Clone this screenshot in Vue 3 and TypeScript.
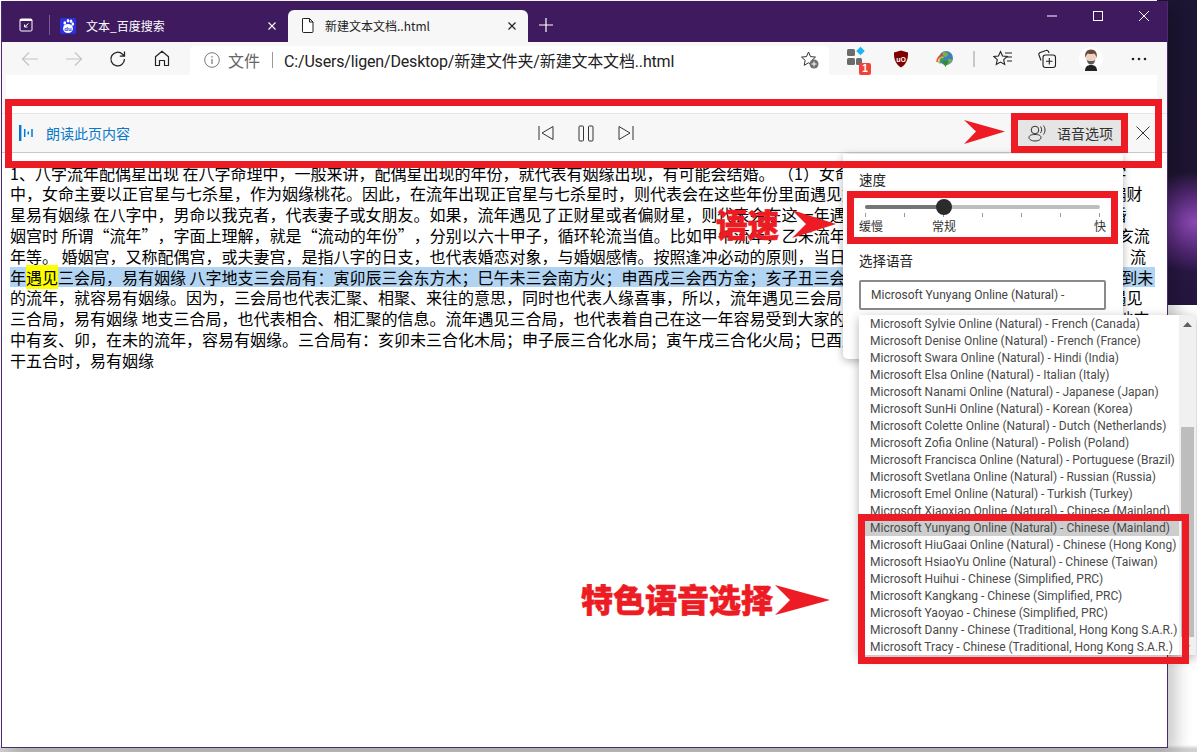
<script setup lang="ts">
const before: string[] = [
  '1、八字流年配偶星出现 在八字命理中，一般来讲，配偶星出现的年份，就代表有姻缘出现，有可能会结婚。 （1）女命流年配偶星容易出现，易有姻缘 在八字',
  '中，女命主要以正官星与七杀星，作为姻缘桃花。因此，在流年出现正官星与七杀星时，则代表会在这些年份里面遇见姻缘桃花。 （2）男命流年遇见正财或偏财',
  '星易有姻缘 在八字中，男命以我克者，代表妻子或女朋友。如果，流年遇见了正财星或者偏财星，则代表会在这一年遇见心仪的对象，有望结婚2、流年冲动婚',
]
const after: string[] = [
  '的流年，就容易有姻缘。因为，三会局也代表汇聚、相聚、来往的意思，同时也代表人缘喜事，所以，流年遇见三会局，也就代表容易有姻缘出现。 4、流年遇见',
  '三合局，易有姻缘 地支三合局，也代表相合、相汇聚的信息。流年遇见三合局，也代表着自己在这一年容易受到大家的喜欢和关注。比如，如果你的命局八字地支',
  '中有亥、卯，在未的流年，容易有姻缘。三合局有：亥卯未三合化木局；申子辰三合化水局；寅午戌三合化火局；巳酉丑三合化金局。 5、流年天',
  '干五合时，易有姻缘',
]

const voices: string[] = [
  'Microsoft Sylvie Online (Natural) - French (Canada)',
  'Microsoft Denise Online (Natural) - French (France)',
  'Microsoft Swara Online (Natural) - Hindi (India)',
  'Microsoft Elsa Online (Natural) - Italian (Italy)',
  'Microsoft Nanami Online (Natural) - Japanese (Japan)',
  'Microsoft SunHi Online (Natural) - Korean (Korea)',
  'Microsoft Colette Online (Natural) - Dutch (Netherlands)',
  'Microsoft Zofia Online (Natural) - Polish (Poland)',
  'Microsoft Francisca Online (Natural) - Portuguese (Brazil)',
  'Microsoft Svetlana Online (Natural) - Russian (Russia)',
  'Microsoft Emel Online (Natural) - Turkish (Turkey)',
  'Microsoft Xiaoxiao Online (Natural) - Chinese (Mainland)',
  'Microsoft Yunyang Online (Natural) - Chinese (Mainland)',
  'Microsoft HiuGaai Online (Natural) - Chinese (Hong Kong)',
  'Microsoft HsiaoYu Online (Natural) - Chinese (Taiwan)',
  'Microsoft Huihui - Chinese (Simplified, PRC)',
  'Microsoft Kangkang - Chinese (Simplified, PRC)',
  'Microsoft Yaoyao - Chinese (Simplified, PRC)',
  'Microsoft Danny - Chinese (Traditional, Hong Kong S.A.R.)',
  'Microsoft Tracy - Chinese (Traditional, Hong Kong S.A.R.)',
]
const activeVoice = 12
</script>

<template>
  <div class="screen">
    <div class="wallpaper"></div>
    <div class="window">
      <header class="titlebar">
        <svg class="workspace" width="14" height="14" viewBox="0 0 14 14">
          <rect x="0.5" y="0.5" width="13" height="13" rx="2" fill="#fff" />
          <rect x="1.5" y="3" width="11" height="9.5" fill="#401a5e" />
          <path d="M9.5 5.5 6 8.5M5.5 6.5v2.5h3" stroke="#fff" fill="none" />
        </svg>
        <span class="tab-sep"></span>
        <div class="tab">
          <svg width="16" height="16" viewBox="0 0 16 16">
            <rect width="16" height="16" rx="2" fill="#2932e1" />
            <ellipse cx="8" cy="2.8" rx="1.3" ry="1.8" fill="#fff" />
            <ellipse cx="11" cy="3.2" rx="1.3" ry="1.8" fill="#fff" />
            <ellipse cx="4.8" cy="5" rx="1.4" ry="1.8" fill="#fff" />
            <ellipse cx="12.8" cy="6" rx="1.3" ry="1.7" fill="#fff" />
            <ellipse cx="8" cy="10.5" rx="5" ry="4.5" fill="#fff" />
            <text x="8" y="13" class="du">du</text>
          </svg>
          <span class="tab-title light">文本_百度搜索</span>
          <svg class="tab-close" width="10" height="10" viewBox="0 0 10 10">
            <path d="M1.5 1.5l7 7M8.5 1.5l-7 7" stroke="#fff" stroke-width="1.1" />
          </svg>
        </div>
        <div class="tab active">
          <svg width="12" height="15" viewBox="0 0 12 15">
            <path d="M1.5.5h6l3.5 3.5v9.5a1 1 0 0 1-1 1h-8.500a1 1 0 0 1-1-1v-12.500a1 1 0 0 1 1-1zM7.500.5v3.500h3.500" fill="#fff" stroke="#222" />
          </svg>
          <span class="tab-title">新建文本文档..html</span>
          <svg class="tab-close" width="10" height="10" viewBox="0 0 10 10">
            <path d="M1.500 1.500l7 7M8.500 1.500l-7 7" stroke="#222" stroke-width="1.200" />
          </svg>
        </div>
        <svg class="newtab" width="16" height="16" viewBox="0 0 16 16">
          <path d="M8 1v14M1 8h14" stroke="#fff" stroke-width="1.200" />
        </svg>
        <div class="winctrls">
          <span><svg width="12" height="12" viewBox="0 0 12 12"><path d="M1 6h10" stroke="#fff" /></svg></span>
          <span><svg width="12" height="12" viewBox="0 0 12 12"><rect x="1.500" y="1.500" width="9" height="9" fill="none" stroke="#fff" /></svg></span>
          <span><svg width="12" height="12" viewBox="0 0 12 12"><path d="M1 1l10 10M11 1L1 11" stroke="#fff" /></svg></span>
        </div>
      </header>

      <nav class="toolbar">
        <button class="tool">
          <svg width="18" height="16" viewBox="0 0 18 16"><path d="M17 8H1.500M8 1.500L1.500 8 8 14.500" fill="none" stroke="#c4c4c4" stroke-width="1.200" /></svg>
        </button>
        <button class="tool">
          <svg width="18" height="16" viewBox="0 0 18 16"><path d="M1 8h15.500M10 1.500L16.500 8 10 14.500" fill="none" stroke="#c4c4c4" stroke-width="1.200" /></svg>
        </button>
        <button class="tool">
          <svg width="18" height="18" viewBox="0 0 18 18"><path d="M15.500 9a6.800 6.800 0 1 1-2-4.800L15.500 6.200M15.500 1.500v4.700h-4.700" fill="none" stroke="#222" stroke-width="1.300" /></svg>
        </button>
        <button class="tool">
          <svg width="16" height="17" viewBox="0 0 16 17"><path d="M1.500 15.500V6.800L8 1.200l6.500 5.600v8.700h-4v-5h-5v5z" fill="none" stroke="#222" stroke-width="1.200" stroke-linejoin="round" /></svg>
        </button>
        <div class="address">
          <svg width="16" height="16" viewBox="0 0 16 16">
            <circle cx="8" cy="8" r="7.300" fill="none" stroke="#7a7a7a" />
            <path d="M8 7v5M8 4v1.500" stroke="#7a7a7a" stroke-width="1.200" />
          </svg>
          <span class="scheme">文件</span>
          <span class="addr-sep"></span>
          <span class="url">C:/Users/ligen/Desktop/新建文件夹/新建文本文档..html</span>
          <svg class="star-add" width="20" height="20" viewBox="0 0 20 20">
            <path d="M8.500 2l2 4.600 5 .5-3.700 3.300 1 4.900-4.300-2.500-4.300 2.500 1-4.900L1.500 7.100l5-.5z" fill="none" stroke="#333" />
            <circle cx="14" cy="14" r="4.500" fill="#6e6e6e" />
            <path d="M14 11.500v5M11.500 14h5" stroke="#fff" />
          </svg>
        </div>
        <button class="tool ext">
          <svg width="24" height="26" viewBox="0 0 24 26">
            <rect x="2" y="3" width="8" height="7" rx="1.500" fill="#6b6b6b" />
            <rect x="2" y="12" width="8" height="7" rx="1.500" fill="#6b6b6b" />
            <rect x="11" y="12" width="6" height="7" rx="1.500" fill="#6b6b6b" />
            <rect x="12.500" y="2" width="6" height="6" transform="rotate(45 15.500 5)" fill="#19b5f5" />
          </svg>
          <span class="badge">1</span>
        </button>
        <button class="tool">
          <svg width="16" height="18" viewBox="0 0 16 18">
            <path d="M8 .5l7 2c.3 7-2 12-7 15-5-3-7.300-8-7-15z" fill="#800000" />
            <text x="8" y="11.500" class="ubo">uO</text>
          </svg>
        </button>
        <button class="tool">
          <svg width="18" height="18" viewBox="0 0 18 18">
            <circle cx="10" cy="8" r="7" fill="#3f7fb5" />
            <path d="M6 2.500c3-1 6 0 6 2s-3 3-4 2-2-3-2-4zM12 9c2 0 4 0 4 1s-2 4-4 4z" fill="#78b04a" />
            <path d="M1 12c0-4 3-7 6-7" fill="none" stroke="#e8452c" stroke-width="1.500" />
            <path d="M2.500 13c0-4 2.500-6 5-6" fill="none" stroke="#f2c12e" stroke-width="1.500" />
            <path d="M4 13.500c.3-3 2-5 4-5" fill="none" stroke="#3aa54a" stroke-width="1.500" />
            <path d="M6 11h7l-3.500 6z" fill="#2f8f2f" />
          </svg>
        </button>
        <span class="tool-sep"></span>
        <button class="tool">
          <svg width="20" height="18" viewBox="0 0 20 18">
            <path d="M7.500 1.500l2 4.500 4.800.5-3.600 3.200 1 4.800-4.200-2.400L3.300 14.500l1-4.800L.8 6.500l4.700-.5z" fill="none" stroke="#222" stroke-width="1.100" />
            <path d="M12 3h7M14 7h5M14 11h5" stroke="#222" stroke-width="1.100" />
          </svg>
        </button>
        <button class="tool">
          <svg width="20" height="20" viewBox="0 0 20 20">
            <path d="M4 11.500l-2-5.500a2 2 0 0 1 1.200-2.500L9 1.500a2 2 0 0 1 2.500 1l.5 1.500" fill="none" stroke="#222" stroke-width="1.100" />
            <rect x="6" y="6" width="12.500" height="12.500" rx="2.500" fill="none" stroke="#222" stroke-width="1.100" />
            <path d="M12.300 9v6.500M9 12.300h6.500" stroke="#222" stroke-width="1.100" />
          </svg>
        </button>
        <button class="tool">
          <svg width="24" height="24" viewBox="0 0 24 24">
            <circle cx="12" cy="12" r="12" fill="#fff" />
            <path d="M6 24c0-4 2-6 6-6s6 2 6 6z" fill="#222" />
            <ellipse cx="12" cy="10.500" rx="5" ry="6" fill="#ecd2c2" />
            <path d="M6.500 11C5 5.500 8 2.500 12 2.500s7 3 5.500 8.500c-.5-2.500-1.500-4-2.500-4.500-2 .8-4.500.8-6 0-1 .5-2 2-2.500 4.500z" fill="#6a4a3c" />
            <path d="M8 13c1 1 2 1 4 1s3 0 4-1c0 3-2 4.500-4 4.500S8 16 8 13z" fill="#5a5a5a" />
          </svg>
        </button>
        <button class="tool dots">
          <svg width="16" height="4" viewBox="0 0 16 4"><circle cx="2" cy="2" r="1.300" fill="#222" /><circle cx="8" cy="2" r="1.300" fill="#222" /><circle cx="14" cy="2" r="1.300" fill="#222" /></svg>
        </button>
      </nav>

      <main class="page">
        <div class="page-head"><div class="page-head-inner"></div></div>

        <section class="readbar">
          <div class="read-title">
            <svg width="15" height="16" viewBox="0 0 15 16">
              <path d="M1.200 0v16" stroke="#0078d4" stroke-width="2.400" />
              <path d="M5.700 4v8" stroke="#0078d4" stroke-width="1.500" />
              <path d="M9.300 6.500v3" stroke="#0078d4" stroke-width="1.500" />
              <path d="M13 4v8" stroke="#0078d4" stroke-width="1.500" />
            </svg>
            <span>朗读此页内容</span>
          </div>
          <div class="read-controls">
            <svg width="16" height="16" viewBox="0 0 16 16"><path d="M1 1v14M15 1.500v13L4 8z" fill="none" stroke="#333" /></svg>
            <svg width="16" height="17" viewBox="0 0 16 17"><rect x="1" y="1" width="4.500" height="15" rx="1" fill="none" stroke="#333" /><rect x="10.500" y="1" width="4.500" height="15" rx="1" fill="none" stroke="#333" /></svg>
            <svg width="16" height="16" viewBox="0 0 16 16"><path d="M15 1v14M1 1.500v13L12 8z" fill="none" stroke="#333" /></svg>
          </div>
          <div class="read-right">
            <button class="voice-btn">
              <svg width="18" height="17" viewBox="0 0 18 17">
                <circle cx="7" cy="5" r="3.800" fill="none" stroke="#333" />
                <path d="M1 12.500c0-2 2-3 6-3s6 1 6 3-2.500 3.500-6 3.500-6-1.500-6-3.500z" fill="none" stroke="#333" />
                <path d="M12.500 1.500c1.500 2 1.500 4.500 0 6.500M15.500.5c2 3 2 6 0 9" fill="none" stroke="#333" />
              </svg>
              <span>语音选项</span>
            </button>
            <svg class="read-close" width="14" height="14" viewBox="0 0 14 14"><path d="M.5.500l13 13M13.500.5l-13 13" stroke="#333" /></svg>
          </div>
        </section>

        <article class="content">
          <div v-for="line in before" :key="line" class="line">{{ line }}</div>
          <div class="line">姻宫时 所谓<span class="qo">“</span>流年<span class="qc">”</span>，字面上理解，就是<span class="qo">“</span>流动的年份<span class="qc">”</span>，分别以六十甲子，循环轮流当值。比如甲午流年，乙未流年，丙申流年，丁酉流年，戊戌流年，己亥流</div>
          <div class="line">年等。 婚姻宫，又称配偶宫，或夫妻宫，是指八字的日支，也代表婚恋对象，与婚姻感情。按照逢冲必动的原则，当日支被流年冲动时，也容易出现姻缘。  3、流</div>
          <div class="line sel">年<mark>遇见</mark>三会局，易有姻缘 八字地支三会局有：寅卯辰三会东方木；巳午未三会南方火；申酉戌三会西方金；亥子丑三会北方水。 比如八字中有亥、子，流年遇到未</div>
          <div v-for="line in after" :key="line" class="line">{{ line }}</div>
        </article>
      </main>
    </div>

    <!-- read aloud options flyout -->
    <aside class="panel">
      <div class="panel-label">速度</div>
      <div class="slider">
        <div class="track"><div class="track-fill"></div><div class="thumb"></div></div>
        <div class="ticks"><i v-for="n in 7" :key="n"></i></div>
        <div class="scale"><span>缓慢</span><span class="mid">常规</span><span class="fast">快</span></div>
      </div>
      <div class="panel-label second">选择语音</div>
      <div class="select">Microsoft Yunyang Online (Natural) -</div>
    </aside>

    <div class="dropdown">
      <ul class="options">
        <li v-for="(v, i) in voices" :key="v" :class="{ on: i === activeVoice }">{{ v }}</li>
      </ul>
      <div class="scrollbar">
        <svg class="arr up" width="9" height="5" viewBox="0 0 9 5"><path d="M4.500 0L9 5H0z" fill="#606060" /></svg>
        <div class="scroll-thumb"></div>
        <svg class="arr down" width="7" height="4" viewBox="0 0 7 4"><path d="M0 0h7L3.500 4z" fill="#bbb" /></svg>
      </div>
    </div>

    <!-- red annotations drawn over the screenshot -->
    <div class="mark-box box-bar"></div>
    <div class="mark-box box-btn"></div>
    <div class="mark-box box-speed"></div>
    <div class="mark-box box-voices"></div>
    <span class="note note-speed">语速</span>
    <span class="note note-voice">特色语音选择</span>
    <svg class="arrow arrow-btn" width="41" height="24" viewBox="0 0 41 24"><path d="M0 0l41 11.500L0 24l12-12.500z" fill="#ed1c24" /></svg>
    <svg class="arrow arrow-speed" width="44" height="28" viewBox="0 0 44 28"><path d="M0 0l44 14L0 28l14-14z" fill="#ed1c24" /></svg>
    <svg class="arrow arrow-voice" width="55" height="30" viewBox="0 0 55 30"><path d="M0 0l55 15L0 30l15-15z" fill="#ed1c24" /></svg>
  </div>
</template>

<style>
html, body { margin: 0; background: #fff; }
</style>

<style scoped>
.screen {
  position: relative;
  width: 1197px;
  height: 752px;
  overflow: hidden;
  background: linear-gradient(#fff 745px, #d0d0d0 749px);
  font-family: "Noto Sans CJK SC", "Noto Sans", sans-serif;
  color: #000;
}
.wallpaper {
  position: absolute;
  top: 0;
  right: 0;
  width: 40px;
  height: 305px;
  background:
    radial-gradient(ellipse 70px 50px at 95% 222px, #8a48b4 0%, rgba(120, 55, 160, .55) 55%, transparent 100%),
    linear-gradient(#1c1533 0, #1d1531 170px, #2a1846 240px, #24163f 305px);
}
.window {
  position: absolute;
  left: 1px;
  top: 1px;
  width: 1167px;
  height: 747px;
  box-sizing: border-box;
  border: 1px solid #4a2a70;
  border-top: 0;
  background: #fff;
  box-shadow: 8px 6px 16px rgba(0, 0, 0, .22);
  display: flex;
  flex-direction: column;
}
.titlebar {
  height: 41px;
  flex: none;
  display: flex;
  align-items: center;
  padding-left: 17px;
  background: #401a5e;
}
.workspace { margin-top: 7px; }
.tab-sep {
  width: 1px;
  height: 20px;
  margin: 7px 10px 0 16px;
  background: #7a5a92;
}
.tab {
  width: 228px;
  height: 32px;
  box-sizing: border-box;
  align-self: flex-end;
  display: flex;
  align-items: center;
  padding: 0 11px 1px 0;
}
.tab-title {
  margin-left: 10px;
  flex: 1;
  font-size: 12px;
  white-space: nowrap;
  color: #222;
}
.tab-title.light { color: #fff; }
.tab.active {
  width: 240px;
  padding: 0 11px 1px 14px;
  background: #f7f7f7;
  border-radius: 6px 6px 0 0;
}
.tab.active .tab-title { margin-left: 11px; }
.du {
  font-size: 6px;
  font-family: "Liberation Sans", sans-serif;
  font-weight: 700;
  fill: #2932e1;
  text-anchor: middle;
}
.newtab { margin: 7px 0 0 10px; }
.winctrls {
  margin-left: auto;
  align-self: flex-start;
  display: flex;
}
.winctrls span {
  width: 46px;
  height: 29px;
  display: flex;
  align-items: center;
  justify-content: center;
}
.toolbar {
  height: 33px;
  flex: none;
  display: flex;
  align-items: center;
  padding-left: 6px;
  background: #f7f7f7;
}
.tool {
  position: relative;
  width: 44px;
  height: 33px;
  padding: 0;
  border: 0;
  background: none;
  display: flex;
  align-items: center;
  justify-content: center;
  flex: none;
}
.tool.ext { margin-left: 6px; }
.tool.dots { margin-left: 4px; }
.address {
  width: 639px;
  height: 29px;
  margin-left: 6px;
  align-self: flex-end;
  box-sizing: border-box;
  display: flex;
  align-items: center;
  padding: 0 9px 2px 14px;
  background: #fff;
  border-radius: 4px 4px 0 0;
}
.scheme {
  margin-left: 8px;
  font-size: 16px;
  color: #666;
}
.addr-sep {
  width: 1px;
  height: 16px;
  margin: 0 11px 0 12px;
  background: #999;
}
.url {
  font-size: 16px;
  font-family: Roboto, "Noto Sans CJK SC", sans-serif;
  letter-spacing: -.17px;
  color: #222;
  white-space: nowrap;
}
.star-add { margin-left: auto; }
.badge {
  position: absolute;
  left: 24px;
  top: 21px;
  width: 12px;
  height: 12px;
  border-radius: 2px;
  background: #f04438;
  color: #fff;
  font: 700 10px/12px "Liberation Sans", sans-serif;
  text-align: center;
}
.ubo {
  font-size: 7px;
  font-family: "Liberation Sans", sans-serif;
  font-weight: 700;
  fill: #fff;
  text-anchor: middle;
}
.tool-sep {
  width: 2px;
  height: 16px;
  margin: 0 6px;
  background: #c8c8c8;
  flex: none;
}
.page {
  flex: 1;
  min-height: 0;
  overflow: hidden;
}
.page-head {
  height: 38px;
  padding: 0 10px 0 4px;
  background: #f7f7f7;
}
.page-head-inner {
  height: 38px;
  background: #fff;
}
.readbar {
  height: 40px;
  box-sizing: border-box;
  display: grid;
  grid-template-columns: 1fr auto 1fr;
  align-items: center;
  padding: 0 14px 0 17px;
  background: #f7f7f7;
  border-top: 1px solid #e4e4e4;
  border-bottom: 1px solid #c8c8c8;
}
.read-title {
  display: flex;
  align-items: center;
  gap: 12px;
  font-size: 14px;
  color: #0a78c8;
}
.read-controls {
  display: flex;
  align-items: center;
  gap: 24px;
}
.read-right {
  display: flex;
  align-items: center;
  justify-content: flex-end;
}
.voice-btn {
  width: 103px;
  height: 26px;
  padding: 0 8px 0 10px;
  border: 0;
  background: #e5e5e5;
  display: flex;
  align-items: center;
  gap: 11px;
  font-family: inherit;
  font-size: 14px;
  color: #333;
  white-space: nowrap;
}
.read-close { margin: 0 3px 0 15px; }
.content {
  padding: 9.600px 0 0 8px;
  font-size: 16px;
  line-height: 20.800px;
}
.line { white-space: pre; }
.line.sel {
  width: 1145px;
  background: #b2d4f3;
}
.qo, .qc {
  display: inline-block;
  width: 16px;
}
.qo { text-align: right; }
.qc { text-align: left; }
mark {
  background: #ffff00;
  color: #000;
}
.panel {
  position: absolute;
  left: 843px;
  top: 154px;
  width: 280px;
  height: 205px;
  box-sizing: border-box;
  padding: 16px 17px 0 16px;
  background: #fff;
  border-radius: 0 0 5px 5px;
  box-shadow: 0 2px 8px rgba(0, 0, 0, .3);
}
.panel-label {
  font-size: 13.500px;
  line-height: 18px;
  color: #222;
}
.panel-label.second { margin-top: 17px; }
.slider { margin-top: 17px; }
.track {
  position: relative;
  height: 4px;
  margin: 0 6px;
  width: 235px;
  border-radius: 2px;
  background: #bdbdbd;
}
.track-fill {
  width: 79px;
  height: 4px;
  border-radius: 2px;
  background: #767676;
}
.thumb {
  position: absolute;
  left: 71px;
  top: -6px;
  width: 16px;
  height: 16px;
  border-radius: 50%;
  background: #2b2b2b;
}
.ticks {
  display: flex;
  justify-content: space-between;
  width: 235px;
  margin: 4px 6px 0;
}
.ticks i {
  width: 1px;
  height: 4px;
  background: #999;
}
.scale {
  display: flex;
  width: 247px;
  font-size: 12px;
  line-height: 17px;
  color: #333;
}
.scale .mid { margin-left: 49px; }
.scale .fast { margin-left: auto; }
.select {
  width: 247px;
  height: 30px;
  margin-top: 11px;
  box-sizing: border-box;
  padding-left: 10px;
  border: 2px solid #8a8a8a;
  border-radius: 2px;
  font: 12px/26px Roboto, sans-serif;
  color: #444;
  white-space: nowrap;
}
.dropdown {
  position: absolute;
  left: 859px;
  top: 315px;
  width: 337px;
  height: 340px;
  display: flex;
  background: #fff;
  box-shadow: 0 3px 10px rgba(0, 0, 0, .3);
}
.options {
  flex: 1;
  margin: 0;
  padding: 0;
  list-style: none;
  font: 12px/17px Roboto, sans-serif;
  color: #4a4a4a;
}
.options li {
  height: 17px;
  box-sizing: border-box;
  padding: 1px 0 0 11px;
  white-space: nowrap;
}
.options li.on { background: #cdcdcd; }
.scrollbar {
  position: relative;
  width: 17px;
  background: #f0f0f0;
}
.scroll-thumb {
  position: absolute;
  left: 2px;
  top: 112px;
  width: 13px;
  height: 210px;
  background: #bdbdbd;
}
.arr { position: absolute; }
.arr.up { left: 4px; top: 7px; }
.arr.down { left: 5px; bottom: 6px; }
.mark-box {
  position: absolute;
  box-sizing: border-box;
  border: 7px solid #ed1c24;
}
.box-bar { left: 5px; top: 99px; width: 1157px; height: 69px; }
.box-btn { left: 1011px; top: 113px; width: 117px; height: 40px; }
.box-speed { left: 847px; top: 191px; width: 271px; height: 53px; }
.box-voices { left: 858px; top: 514px; width: 331px; height: 150px; }
.note {
  position: absolute;
  color: #ed1c24;
  font-weight: 900;
  white-space: nowrap;
  -webkit-text-stroke: .6px #ed1c24;
}
.note-speed { left: 716px; top: 202px; font-size: 31.500px; line-height: 42px; }
.note-voice { left: 581px; top: 577px; font-size: 32px; line-height: 42px; }
.arrow { position: absolute; }
.arrow-btn { left: 964px; top: 120px; }
.arrow-speed { left: 792px; top: 210px; }
.arrow-voice { left: 775px; top: 585px; }
</style>
